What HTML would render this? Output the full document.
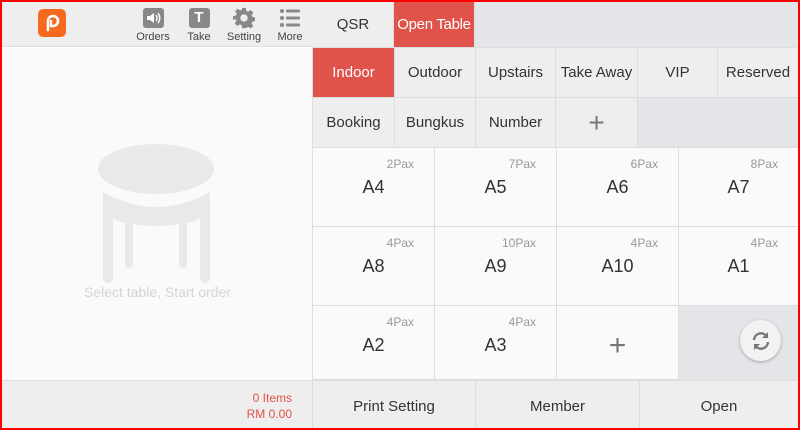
<!DOCTYPE html><html><head><style>
*{box-sizing:border-box;margin:0;padding:0}
body{width:800px;height:430px;overflow:hidden;font-family:"Liberation Sans",sans-serif;background:#fff;position:relative}
.a{position:absolute;display:flex;align-items:center;justify-content:center;white-space:nowrap}
.frame{position:absolute;left:0;top:0;width:800px;height:430px;border:2px solid #f00;pointer-events:none;z-index:9}
.tab{font-size:15px;color:#333;background:#eeeeee;border-right:1px solid #ddd;border-bottom:1px solid #ddd}
.red{background:#e0534a;color:#fff}
.cell{background:#fafafa;border-right:1px solid #ddd;border-bottom:1px solid #ddd;font-size:18px;color:#333}
.pax{position:absolute;right:20px;top:9px;font-size:12px;color:#999}
.ic{position:absolute;top:6px;width:40px;text-align:center;font-size:11px;color:#444}
.btn{font-size:15px;color:#333;background:#eeeeee;border-right:1px solid #ddd;border-top:1px solid #ddd}
</style></head><body>
<div class="frame"></div>
<div class="a" style="left:2px;top:2px;width:311px;height:45px;background:#eeeeee;border-bottom:1px solid #ddd"></div>
<div class="a" style="left:38px;top:9px;width:28px;height:28px;background:#f56a1f;border-radius:5px">
<svg width="20" height="20" viewBox="0 0 20 20"><path d="M6 17V8a5 5 0 1 1 5 5H9" fill="none" stroke="#fff" stroke-width="2.6" stroke-linecap="round"/><path d="M9 7v6" stroke="#fff" stroke-width="2.2"/></svg></div>
<div class="ic" style="left:133px"><div style="margin:2px auto 0;width:21px;height:20px;background:#888;border-radius:3px;display:flex;align-items:center;justify-content:center"><svg width="16" height="14" viewBox="0 0 16 14"><path d="M2 5h3l4-3v10l-4-3H2z" fill="#fff"/><path d="M11 4q2 3 0 6M13 2q3.5 5 0 10" stroke="#fff" fill="none" stroke-width="1.4"/></svg></div><div style="margin-top:3px">Orders</div></div>
<div class="ic" style="left:179px"><div style="margin:2px auto 0;width:21px;height:20px;background:#888;border-radius:3px;color:#fff;font-weight:bold;font-size:15px;line-height:20px">T</div><div style="margin-top:3px">Take</div></div>
<div class="ic" style="left:224px"><svg width="22" height="22" viewBox="0 0 24 24" style="display:block;margin:1px auto 0"><path fill="#888" fill-rule="evenodd" d="M10 1h4l.6 3.2 2 .9 2.7-1.8 2.8 2.8-1.8 2.7.9 2 3.2.6v4l-3.2.6-.9 2 1.8 2.7-2.8 2.8-2.7-1.8-2 .9L14 23h-4l-.6-3.2-2-.9-2.7 1.8-2.8-2.8 1.8-2.7-.9-2L0 14v-4l3.2-.6.9-2-1.8-2.7 2.8-2.8 2.7 1.8 2-.9zM12 8a4 4 0 1 0 0 8 4 4 0 1 0 0-8z"/></svg><div style="margin-top:2px">Setting</div></div>
<div class="ic" style="left:270px"><svg width="22" height="22" viewBox="0 0 22 22" style="display:block;margin:1px auto 0"><g fill="#888"><circle cx="3" cy="4" r="2"/><circle cx="3" cy="11" r="2"/><circle cx="3" cy="18" r="2"/><rect x="7" y="2.5" width="14" height="3" rx="1"/><rect x="7" y="9.5" width="14" height="3" rx="1"/><rect x="7" y="16.5" width="14" height="3" rx="1"/></g></svg><div style="margin-top:2px">More</div></div>
<div style="position:absolute;left:2px;top:48px;width:311px;height:332px;background:#fafafa;border-right:1px solid #ddd"></div>
<svg style="position:absolute;left:90px;top:135px" width="135" height="150" viewBox="90 135 135 150"><g fill="#e9e9e9"><ellipse cx="156" cy="169" rx="58" ry="25"/><path d="M103 192q53 30 107 0v86a5 5 0 0 1-10 0V218q-5 4-13 5v41a4 4 0 0 1-8 0v-40q-23 4-46 0v40a4 4 0 0 1-8 0v-41q-8-1-12-5v60a5 5 0 0 1-10 0z"/></g></svg>
<div class="a" style="left:2px;top:282px;width:311px;height:20px;font-size:14px;color:#d4d4d4">Select table, Start order</div>
<div style="position:absolute;left:2px;top:380px;width:311px;height:48px;background:#eeeeee;border-top:1px solid #ddd;border-right:1px solid #ddd;text-align:right;padding:9px 20px 0 0;font-size:12px;color:#e0534a;line-height:16px">0 Items<br>RM 0.00</div>
<div class="a" style="left:313px;top:2px;width:485px;height:46px;background:#e4e5e8;border-bottom:1px solid #ddd"></div>
<div class="a tab" style="left:313px;top:2px;width:81px;height:46px;background:#eeeeee">QSR</div>
<div class="a tab red" style="left:394px;top:2px;width:81px;height:46px;font-size:15px;letter-spacing:-0.3px">Open Table</div>
<div class="a tab red" style="left:313px;top:48px;width:82px;height:50px">Indoor</div>
<div class="a tab" style="left:395px;top:48px;width:81px;height:50px">Outdoor</div>
<div class="a tab" style="left:476px;top:48px;width:80px;height:50px">Upstairs</div>
<div class="a tab" style="left:556px;top:48px;width:82px;height:50px">Take Away</div>
<div class="a tab" style="left:638px;top:48px;width:80px;height:50px">VIP</div>
<div class="a tab" style="left:718px;top:48px;width:80px;height:50px;border-right:0">Reserved</div>
<div class="a" style="left:638px;top:98px;width:160px;height:50px;background:#e4e5e8;border-bottom:1px solid #ddd"></div>
<div class="a tab" style="left:313px;top:98px;width:82px;height:50px">Booking</div>
<div class="a tab" style="left:395px;top:98px;width:81px;height:50px">Bungkus</div>
<div class="a tab" style="left:476px;top:98px;width:80px;height:50px">Number</div>
<div class="a tab" style="left:556px;top:98px;width:82px;height:50px;font-size:28px;color:#777;font-weight:300">+</div>
<div class="a cell" style="left:313px;top:148px;width:122px;height:79px"><span class="pax">2Pax</span>A4</div>
<div class="a cell" style="left:435px;top:148px;width:122px;height:79px"><span class="pax">7Pax</span>A5</div>
<div class="a cell" style="left:557px;top:148px;width:122px;height:79px"><span class="pax">6Pax</span>A6</div>
<div class="a cell" style="left:679px;top:148px;width:119px;height:79px;border-right:0"><span class="pax">8Pax</span>A7</div>
<div class="a cell" style="left:313px;top:227px;width:122px;height:79px"><span class="pax">4Pax</span>A8</div>
<div class="a cell" style="left:435px;top:227px;width:122px;height:79px"><span class="pax">10Pax</span>A9</div>
<div class="a cell" style="left:557px;top:227px;width:122px;height:79px"><span class="pax">4Pax</span>A10</div>
<div class="a cell" style="left:679px;top:227px;width:119px;height:79px;border-right:0"><span class="pax">4Pax</span>A1</div>
<div class="a cell" style="left:313px;top:306px;width:122px;height:74px;padding-top:6px"><span class="pax">4Pax</span>A2</div>
<div class="a cell" style="left:435px;top:306px;width:122px;height:74px;padding-top:6px"><span class="pax">4Pax</span>A3</div>
<div class="a cell" style="left:557px;top:306px;width:122px;height:74px;font-size:30px;color:#777;padding-top:6px">+</div>
<div class="a" style="left:679px;top:306px;width:119px;height:74px;background:#e4e5e8"></div>
<div class="a" style="left:740px;top:320px;width:41px;height:41px;border-radius:50%;background:#f2f2f2;box-shadow:0 1px 3px rgba(0,0,0,.3)">
<svg width="24" height="24" viewBox="0 0 24 24"><path d="M5 11a7 7 0 0 1 12.5-4M19 13a7 7 0 0 1-12.5 4" fill="none" stroke="#777" stroke-width="2.4"/><path d="M19 3v6h-6z M5 21v-6h6z" fill="#777"/></svg></div>
<div class="a btn" style="left:313px;top:380px;width:163px;height:48px;padding-top:4px">Print Setting</div>
<div class="a btn" style="left:476px;top:380px;width:164px;height:48px;padding-top:4px">Member</div>
<div class="a btn" style="left:640px;top:380px;width:158px;height:48px;border-right:0;padding-top:4px">Open</div>
</body></html>
